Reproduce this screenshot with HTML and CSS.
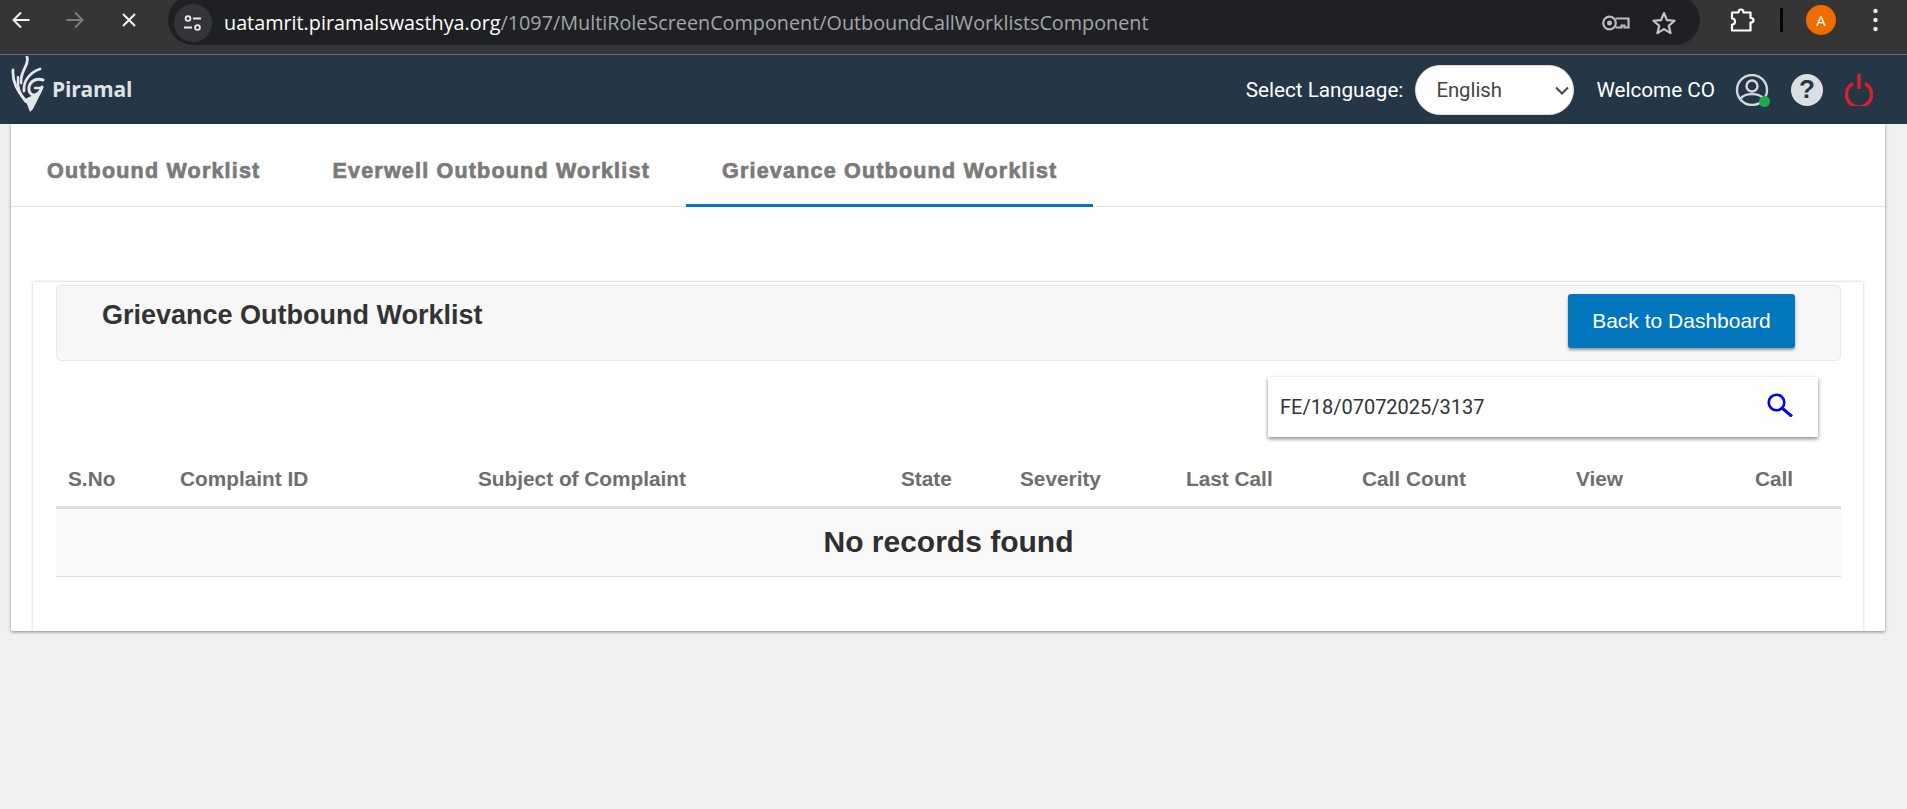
FILE: index.html
```html
<!DOCTYPE html>
<html lang="en">
<head>
<meta charset="utf-8">
<title>Grievance Outbound Worklist</title>
<link rel="stylesheet" href="styles.css">
</head>
<body>
<div class="chrome">
  <svg class="ic-nav" viewBox="0 0 18 18"><path d="M17.5 9H1.5M9 1.5 1.5 9 9 16.500" fill="none" stroke="#f1f3f4" stroke-width="2"/></svg>
  <svg class="ic-nav ic-fwd" viewBox="0 0 18 18"><path d="M.5 9h16M9 1.500 16.500 9 9 16.500" fill="none" stroke="#7b7d80" stroke-width="2"/></svg>
  <svg class="ic-stop" viewBox="0 0 14 14"><path d="M1 1l12 12M13 1 1 13" fill="none" stroke="#f1f3f4" stroke-width="2"/></svg>
  <div class="omnibox">
    <span class="site-btn">
      <svg viewBox="0 0 20 20" class="ic-tune"><g fill="none" stroke="#e8eaed" stroke-width="1.800"><circle cx="5" cy="5.500" r="2.400"/><path d="M10 5.500h8M1 14.500h8"/><circle cx="14.500" cy="14.500" r="2.400"/></g></svg>
    </span>
    <span class="url"><span class="url-host">uatamrit.piramalswasthya.org</span>/1097/MultiRoleScreenComponent/OutboundCallWorklistsComponent</span>
    <svg class="ic-key" viewBox="0 0 28 16"><g fill="none" stroke="#b9bcc0" stroke-width="2.200"><path d="M13.500 3.500H26.500V12.500H22.500V10.500H19.500V12.500H13.500"/><circle cx="7.500" cy="8" r="6.300"/></g><circle cx="7.500" cy="8" r="2.500" fill="#b9bcc0"/></svg>
    <svg class="ic-star" viewBox="0 0 24 24"><path d="M12 2.800 14.700 9.300 21.800 9.900 16.400 14.500 18.100 21.400 12 17.700 5.900 21.400 7.600 14.500 2.200 9.900 9.300 9.300Z" fill="none" stroke="#c4c7ca" stroke-width="2" stroke-linejoin="round"/></svg>
  </div>
  <svg class="ic-ext" viewBox="0 0 25 24"><path d="M2 4.500H8.500C8.500 .5 13.500 .5 13.500 4.500H20.500V10C24.500 10 24.500 14.500 20.500 14.500V22.500H2V16.500C6 16.500 6 10.500 2 10.500Z" fill="none" stroke="#fff" stroke-width="2.200" stroke-linejoin="round"/></svg>
  <span class="chrome-div"></span>
  <span class="avatar">A</span>
  <svg class="ic-dots" viewBox="0 0 5 24"><circle cx="2.500" cy="3" r="2.200" fill="#e8eaed"/><circle cx="2.500" cy="12" r="2.200" fill="#e8eaed"/><circle cx="2.500" cy="21" r="2.200" fill="#e8eaed"/></svg>
</div>

<header class="topbar">
  <div class="brand">
    <svg class="logo" viewBox="0 0 34 56">
      <g fill="none" stroke="#e4e7ea" stroke-linecap="round">
        <path d="M2 14C1 26 6 35 14 44" stroke-width="2.800"/>
        <path d="M7 21C6 30 9 39 15 46" stroke-width="2.400"/>
        <path d="M16 1C19 9 9 14 10 27" stroke-width="2.800"/>
        <path d="M29 13C20 16 12 24 13 35" stroke-width="2.800"/>
        <path d="M32 24C24 21 17 27 18 34C19 41 28 41 31 31" stroke-width="3"/>
        <path d="M24 32H31" stroke-width="2.400"/>
      </g>
      <path d="M14 43 31 35 22 53 19 56Z" fill="#e4e7ea"/>
    </svg>
    <span class="brand-name">Piramal</span>
  </div>
  <div class="user-tools">
    <label class="lang-label" for="lang">Select Language:</label>
    <span class="lang-wrap">
      <select class="lang" id="lang"><option>English</option></select>
      <svg class="lang-chev" viewBox="0 0 14 9"><path d="M1 1.500 7 7.500 13 1.500" fill="none" stroke="#444" stroke-width="2"/></svg>
    </span>
    <span class="welcome">Welcome CO</span>
    <span class="profile">
      <svg viewBox="0 0 34 32" class="ic-profile"><g fill="none" stroke="#d3d7da" stroke-width="2.400"><circle cx="17" cy="16" r="15"/><circle cx="17" cy="12" r="5.500"/><path d="M5.500 25C9 18.500 25 18.500 28.500 25"/></g></svg>
      <span class="online"></span>
    </span>
    <span class="help">?</span>
    <svg class="ic-power" viewBox="0 0 28 32"><g fill="none" stroke="#d8212a" stroke-width="3.400"><path d="M8 9.500A12.500 12.500 0 1 0 20 9.500"/><path d="M14 0V15"/></g></svg>
  </div>
</header>

<main class="panel">
  <nav class="tabs">
    <a class="tab">Outbound Worklist</a>
    <a class="tab">Everwell Outbound Worklist</a>
    <a class="tab tab-active">Grievance Outbound Worklist</a>
  </nav>
  <section class="card">
    <div class="card-head">
      <h2 class="card-title">Grievance Outbound Worklist</h2>
      <button class="back-btn" type="button">Back to Dashboard</button>
    </div>
    <div class="search-row">
      <div class="search">
        <span class="search-value">FE/18/07072025/3137</span>
        <svg class="ic-search" viewBox="0 0 26 24"><circle cx="9.500" cy="9.500" r="7.800" fill="none" stroke="#0000ff" stroke-width="2.600"/><path d="M15 15 25 23.500" stroke="#0000ff" stroke-width="3"/></svg>
      </div>
    </div>
    <table class="grid">
      <colgroup>
        <col class="c1"><col class="c2"><col class="c3"><col class="c4"><col class="c5"><col class="c6"><col class="c7"><col class="c8"><col class="c9">
      </colgroup>
      <thead>
        <tr><th>S.No</th><th>Complaint ID</th><th>Subject of Complaint</th><th>State</th><th>Severity</th><th>Last Call</th><th>Call Count</th><th>View</th><th>Call</th></tr>
      </thead>
      <tbody>
        <tr><td colspan="9">No records found</td></tr>
      </tbody>
    </table>
  </section>
</main>
</body>
</html>
```
FILE: styles.css
```css
* { box-sizing: border-box; }
html, body { margin: 0; height: 100%; }
body { background: #f1f1ef; font-family: "Liberation Sans", Arial, sans-serif; overflow: hidden; }

.chrome {
  height: 55px; background: #353535; border-bottom: 1px solid #6b6a69;
  display: flex; align-items: center; padding-left: 12px; overflow: hidden;
}
.chrome svg { display: block; flex: none; }
.ic-nav { width: 18px; height: 18px; margin-top: -14px; }
.ic-fwd { margin-left: 36px; }
.ic-stop { width: 14px; height: 14px; margin: -14px 32px 0 38px; }
.omnibox {
  width: 1532px; height: 50px; margin-top: -5px; align-self: flex-start;
  background: #1f2023; border-radius: 25px;
  display: flex; align-items: center; padding: 5px 23px 0 6px;
}
.site-btn {
  width: 38px; height: 38px; border-radius: 50%; background: #34353a;
  display: flex; align-items: center; justify-content: center; flex: none;
}
.ic-tune { width: 20px; height: 20px; }
.url {
  flex: 1; margin-left: 12px; color: #a2a5a9; white-space: nowrap;
  font-family: "Open Sans", sans-serif; font-size: 19.800px;
}
.url-host { color: #fff; }
.ic-key { width: 28px; height: 16px; }
.ic-star { width: 26px; height: 26px; margin-left: 21px; }
.ic-ext { width: 25px; height: 24px; margin: -14px 0 0 30px; }
.chrome-div { width: 3px; height: 24px; background: #050505; margin: -14px 23px 0 25px; border-radius: 1px; flex: none; }
.avatar {
  width: 30px; height: 30px; border-radius: 50%; background: #ef6c00; color: #fff; flex: none;
  display: flex; align-items: center; justify-content: center; margin-top: -14px;
  font-family: "Open Sans", sans-serif; font-size: 15px;
}
.ic-dots { width: 5px; height: 24px; margin: -14px 0 0 37px; }

.topbar {
  height: 69px; background: #253646; display: flex; align-items: center; justify-content: space-between;
  padding: 0 34px 0 11px; color: #fff;
}
.brand { display: flex; align-items: center; align-self: flex-start; padding-top: 1px; }
.logo { width: 34px; height: 56px; display: block; }
.brand-name { font-family: "Open Sans", sans-serif; font-weight: 700; font-size: 21px; color: #dfe3e6; margin: 10px 0 0 7px; letter-spacing: -.2px; }
.user-tools { display: flex; align-items: center; font-family: "Roboto", sans-serif; font-size: 20.700px; }
.lang-label { margin-right: 12px; }
.lang-wrap { position: relative; display: block; width: 159px; height: 50px; }
.lang {
  appearance: none; display: block;
  width: 159px; height: 50px; border-radius: 25px; border: 1px solid #ddd; background: #fff; color: #444;
  font-family: "Roboto", sans-serif; font-size: 20.300px; padding-left: 20px;
}
.lang-chev { position: absolute; right: 5px; top: 21px; width: 14px; height: 9px; display: block; }
.welcome { margin: 0 20px 0 22px; }
.profile { position: relative; width: 34px; height: 32px; display: block; }
.ic-profile { width: 34px; height: 32px; display: block; }
.online { position: absolute; right: -1px; bottom: -1px; width: 11px; height: 11px; border-radius: 50%; background: #1faa50; }
.help {
  width: 32px; height: 32px; border-radius: 50%; background: #dcdfe1; color: #253646; margin: 0 22px;
  display: flex; align-items: center; justify-content: center;
  font-family: "Liberation Sans", sans-serif; font-weight: 700; font-size: 26px;
}
.ic-power { width: 28px; height: 32px; display: block; }

.panel {
  height: 507px; margin: 0 22px 0 11px; background: #fff; overflow: hidden;
  box-shadow: 0 1px 3px rgba(0,0,0,.45);
}
.tabs { height: 83px; border-bottom: 1px solid #e3e3e3; display: flex; }
.tab {
  height: 82px; padding: 12px 36px 0; display: flex; align-items: center;
  color: #7a7a7a; font-weight: 700; font-size: 21.500px; letter-spacing: 1.200px;
  -webkit-text-stroke: .7px #7a7a7a; white-space: nowrap;
}
.tab-active { box-shadow: inset 0 -3px 0 #0277bd; height: 83px; padding-bottom: 1px; }

.card {
  margin: 75px 22px 0; height: 349px; padding: 3px 22px 0 23px; background: #fff;
  box-shadow: 0 0 3px rgba(0,0,0,.22);
}
.card-head {
  height: 76px; background: #f7f7f7; border: 1px solid #e8e8e8; border-radius: 5px;
  display: flex; justify-content: space-between; align-items: flex-start; padding: 8px 45px 0 45px;
}
.card-title { margin: 5px 0 0; font-size: 27px; line-height: 32px; font-weight: 700; color: #333; }
.back-btn {
  width: 227px; height: 54px; border: 0; border-radius: 3px; background: #0277bd; color: #fff;
  font-family: "Liberation Sans", sans-serif; font-size: 21px; padding: 0;
  box-shadow: 0 2px 3px rgba(0,0,0,.4);
}
.search-row { display: flex; justify-content: flex-end; margin-top: 16px; padding-right: 23px; }
.search {
  width: 550px; height: 60px; background: #fff; padding: 0 25px 0 12px;
  display: flex; align-items: center; justify-content: space-between;
  box-shadow: 0 2px 4px rgba(0,0,0,.45), 0 0 1px rgba(0,0,0,.1);
}
.search-value { font-family: "Roboto", sans-serif; font-size: 20px; color: #333; }
.ic-search { width: 26px; height: 24px; display: block; margin-top: -5px; }

.grid { width: 1785px; margin-top: 10px; border-collapse: collapse; table-layout: fixed; }
.c1 { width: 112px; } .c2 { width: 298px; } .c3 { width: 423px; } .c4 { width: 119px; }
.c5 { width: 166px; } .c6 { width: 176px; } .c7 { width: 214px; } .c8 { width: 179px; } .c9 { width: 98px; }
.grid th {
  height: 60px; padding: 6px 0 0 12px; text-align: left; color: #6e6e6e; font-size: 20.800px; font-weight: 700;
  border-bottom: 3px solid #dcdcdc; white-space: nowrap;
}
.grid td {
  height: 69px; background: #f9f9f9; border-bottom: 1px solid #dedede; text-align: center;
  color: #2f2f2f; font-size: 30px; font-weight: 700; padding: 0;
}
```
